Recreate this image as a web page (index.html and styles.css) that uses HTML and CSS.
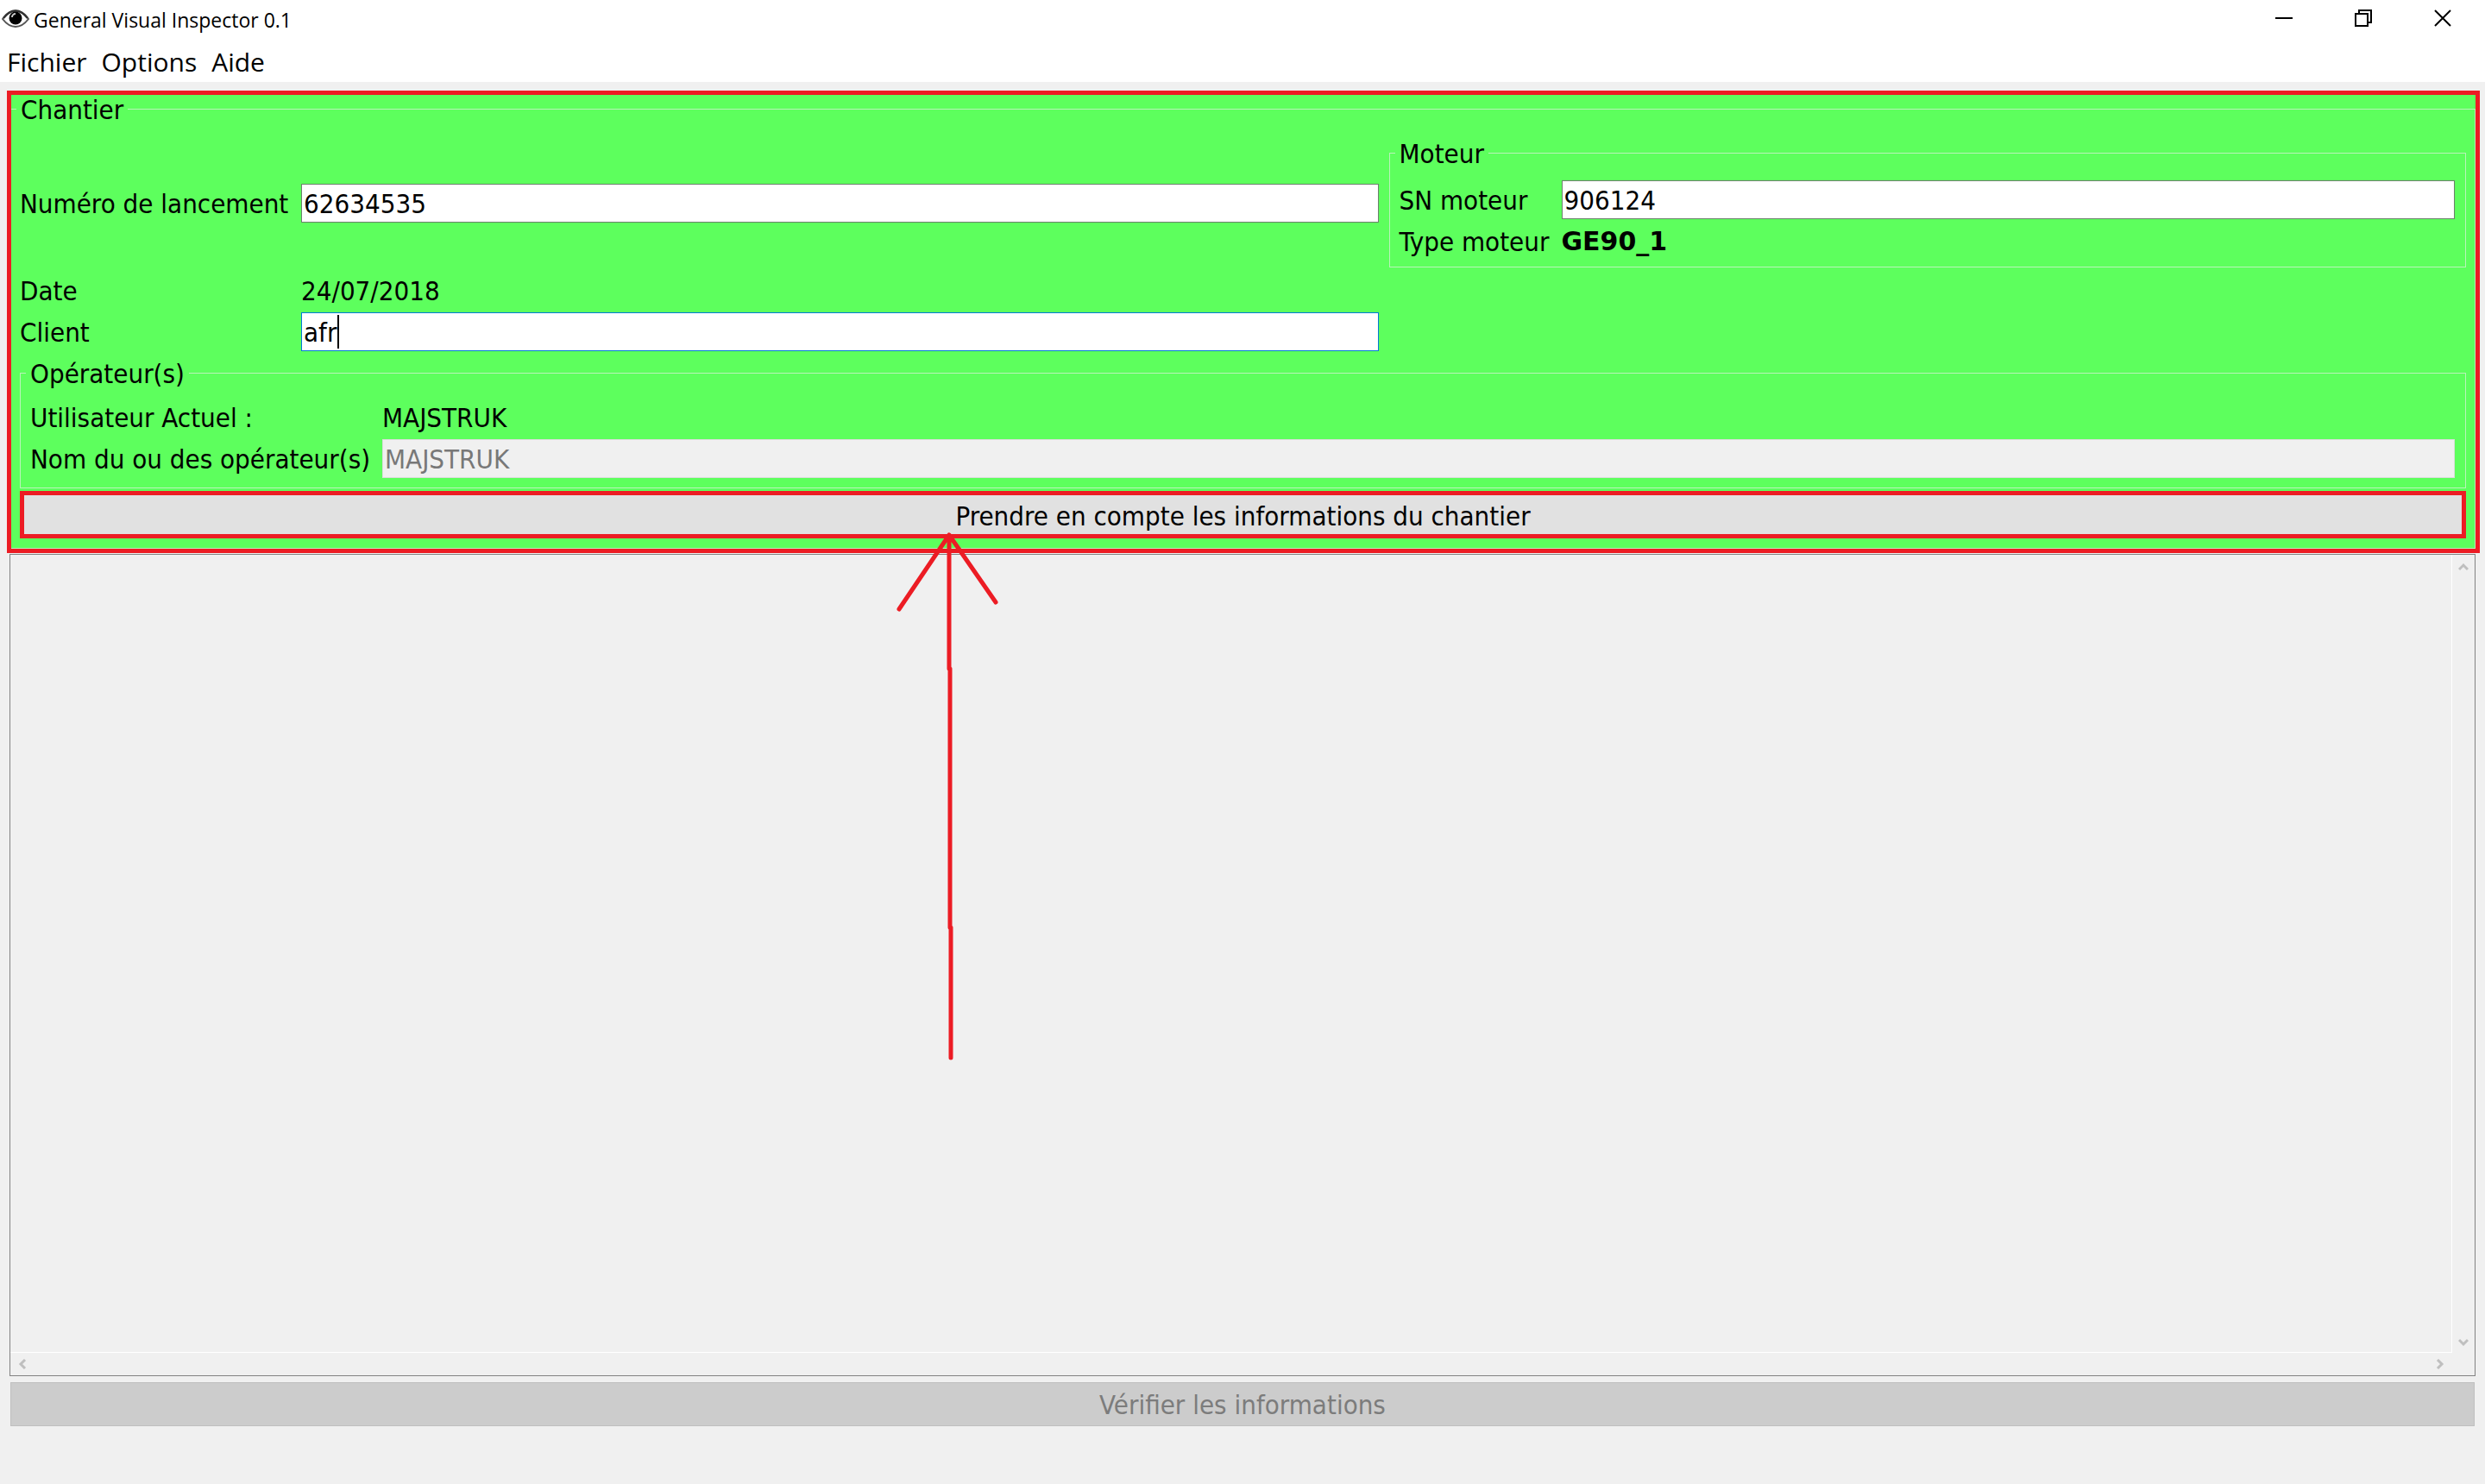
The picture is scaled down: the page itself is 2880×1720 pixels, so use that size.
FILE: index.html
```html
<!DOCTYPE html>
<html lang="fr">
<head>
<meta charset="utf-8">
<title>General Visual Inspector 0.1</title>
<link rel="stylesheet" href="styles.css">
</head>
<body>
<header class="titlebar">
  <svg class="app-icon" width="32" height="22" viewBox="0 0 32 22" aria-hidden="true">
    <path d="M1 11C6 4 11 1.500 16 1.500S26 4 31 11C26 17.500 21 20 16 20S6 17.500 1 11Z" fill="#fff" stroke="#555" stroke-width="2"/>
    <path d="M2 10C7 3.500 11 1.500 16 1.500S25 3.500 30 10" fill="none" stroke="#333" stroke-width="2.500"/>
    <circle cx="16" cy="10" r="7.500" fill="#000"/>
    <path d="M12 9a4 4 0 0 1 4-4" fill="none" stroke="#ccc" stroke-width="2"/>
  </svg>
  <h1 class="title">General Visual Inspector 0.1</h1>
  <div class="window-controls">
    <button class="window-button" type="button" aria-label="Réduire"><svg width="20" height="20" viewBox="0 0 20 20"><path d="M0 10H20" stroke="#000" stroke-width="2"/></svg></button>
    <button class="window-button" type="button" aria-label="Restaurer"><svg width="20" height="20" viewBox="0 0 20 20"><path d="M1 5H15V19H1ZM5 5V1H19V15H15" fill="none" stroke="#000" stroke-width="2"/></svg></button>
    <button class="window-button" type="button" aria-label="Fermer"><svg width="20" height="20" viewBox="0 0 20 20"><path d="M1 1L19 19M19 1L1 19" stroke="#000" stroke-width="2"/></svg></button>
  </div>
</header>
<nav class="menubar">
  <button class="menu" type="button">Fichier</button>
  <button class="menu" type="button">Options</button>
  <button class="menu" type="button">Aide</button>
</nav>
<main class="content">
  <form class="site">
    <fieldset class="group site-group">
      <legend class="legend">Chantier</legend>
      <div class="site-grid">
        <label for="launch">Numéro de lancement</label>
        <input class="input" id="launch" type="text" value="62634535">
        <fieldset class="group engine">
          <legend class="legend">Moteur</legend>
          <div class="engine-grid">
            <label for="serial">SN moteur</label>
            <input class="input" id="serial" type="text" value="906124">
            <span>Type moteur</span>
            <strong class="engine-type">GE90_1</strong>
          </div>
        </fieldset>
        <span class="date">Date</span>
        <span class="date-value">24/07/2018</span>
        <label class="client-label" for="client">Client</label>
        <div class="client-field">
          <input class="input active" id="client" type="text" value="afr">
          <span class="caret"></span>
        </div>
      </div>
      <fieldset class="group operators">
        <legend class="legend">Opérateur(s)</legend>
        <div class="operators-grid">
          <span>Utilisateur Actuel :</span>
          <span>MAJSTRUK</span>
          <label for="operator">Nom du ou des opérateur(s)</label>
          <input class="input" id="operator" type="text" value="MAJSTRUK" disabled>
        </div>
      </fieldset>
      <button class="submit" type="button">Prendre en compte les informations du chantier</button>
    </fieldset>
  </form>
  <section class="viewer">
    <div class="viewport"></div>
    <div class="scroll-y">
      <svg width="12" height="10" viewBox="0 0 12 10"><path d="M1 8L6 3L11 8" fill="none" stroke="#bfbfbf" stroke-width="3"/></svg>
      <svg width="12" height="10" viewBox="0 0 12 10"><path d="M1 2L6 7L11 2" fill="none" stroke="#bfbfbf" stroke-width="3"/></svg>
    </div>
    <div class="scroll-x">
      <svg width="10" height="12" viewBox="0 0 10 12"><path d="M8 1L3 6L8 11" fill="none" stroke="#bfbfbf" stroke-width="3"/></svg>
      <svg width="10" height="12" viewBox="0 0 10 12"><path d="M2 1L7 6L2 11" fill="none" stroke="#bfbfbf" stroke-width="3"/></svg>
    </div>
  </section>
  <button class="verify" type="button" disabled>Vérifier les informations</button>
</main>
<svg class="arrow" width="120" height="620" viewBox="0 0 120 620" aria-hidden="true">
  <path d="M62 8V163H63V463H64V614M4 94L62 8L116 86" fill="none" stroke="#ec1c24" stroke-width="5" stroke-linecap="round" stroke-linejoin="round"/>
</svg>
</body>
</html>
```
FILE: styles.css
```css
* {
  box-sizing: border-box;
}

body {
  margin: 0;
  min-height: 100vh;
  display: flex;
  flex-direction: column;
  position: relative;
  background: #f0f0f0;
  color: #000;
  font: 31px/36px "DejaVu Sans Condensed", "DejaVu Sans", sans-serif;
}

button,
input {
  font: inherit;
  color: inherit;
}

.titlebar,
.menubar {
  display: flex;
  background: #fff;
  font-family: "Open Sans", sans-serif;
}

.titlebar {
  height: 48px;
  padding: 0 3px 0 2px;
  gap: 5px;
}

.app-icon {
  margin-top: 11px;
}

.title {
  margin: 0;
  font-size: 23px;
  font-weight: 400;
  line-height: 46px;
}

.window-controls {
  display: flex;
  margin-left: auto;
}

.window-button {
  width: 92px;
  height: 42px;
  padding: 0;
  border: 0;
  background: none;
  display: flex;
  align-items: center;
  justify-content: center;
}

.menubar {
  height: 47px;
  padding-left: 8px;
  gap: 17px;
}

.menu {
  padding: 0;
  border: 0;
  background: none;
  font-size: 30px;
  line-height: 47px;
}

.content {
  flex: 1;
  display: flex;
  flex-direction: column;
  padding: 10px 6px 67px 8px;
}

.site {
  border: 5px solid #ec1c24;
  background: #5dff5d;
}

.group {
  margin: 0;
  min-width: 0;
  border: 1px solid #b9f3b9;
}

.legend {
  height: 32px;
  line-height: 30px;
  padding: 2px 5px 0;
}

.site-group {
  border-left: 0;
  padding: 19px 10px 11px;
}

.site-group > .legend {
  margin-left: -4px;
}

.site-grid {
  display: grid;
  grid-template-columns: 314px 1fr 1fr;
  column-gap: 12px;
  align-items: center;
  white-space: nowrap;
}

.input {
  display: block;
  width: 100%;
  height: 45px;
  padding: 0 2px;
  border: 1px solid #6c806c;
  border-radius: 0;
  background: #fff;
}

.input.active {
  border-color: #0078d7;
}

.input:disabled {
  border-color: #dcdcdc;
  background: #f0f0f0;
  color: #787878;
}

.engine {
  padding: 16px 12px 8px 11px;
}

.engine .legend,
.operators .legend {
  margin-left: -5px;
}

.engine-grid,
.operators-grid {
  display: grid;
  row-gap: 4px;
  align-items: center;
}

.engine-grid {
  grid-template-columns: 188px 1fr;
  grid-template-rows: 45px 43px;
}

.engine-type {
  font-family: "DejaVu Sans", sans-serif;
  font-size: 30px;
}

.date {
  grid-column: 1;
}

.date,
.date-value {
  padding-top: 2px;
  line-height: 50px;
}

.client-label {
  grid-column: 1;
}

.client-field {
  position: relative;
}

.caret {
  position: absolute;
  top: 3px;
  left: 42px;
  width: 2px;
  height: 39px;
  background: #000;
}

.operators {
  margin-top: 9px;
  padding: 14px 12px 11px 11px;
}

.operators-grid {
  grid-template-columns: 408px 1fr;
  grid-template-rows: 43px 45px;
  white-space: nowrap;
}

.submit {
  display: block;
  width: 100%;
  height: 55px;
  margin-top: 3px;
  padding: 2px 0 0;
  border: 5px solid #ec1c24;
  background: #e1e1e1;
}

.viewer {
  flex: 1;
  display: grid;
  grid-template-columns: 1fr 26px;
  grid-template-rows: 1fr 26px;
  margin: 1px 5px 0 3px;
  border: 1px solid #828282;
}

.viewport {
  border: solid #fff;
  border-width: 0 1px 1px 0;
}

.scroll-y,
.scroll-x {
  display: flex;
  align-items: center;
  justify-content: space-between;
}

.scroll-y {
  flex-direction: column;
  padding: 9px 0 7px;
}

.scroll-x {
  padding: 0 9px;
}

.verify {
  height: 51px;
  margin: 7px 6px 0 4px;
  padding: 0;
  border: 1px solid #bfbfbf;
  background: #ccc;
  color: #7c7c7c;
}

.arrow {
  position: absolute;
  top: 612px;
  left: 1038px;
}
```
